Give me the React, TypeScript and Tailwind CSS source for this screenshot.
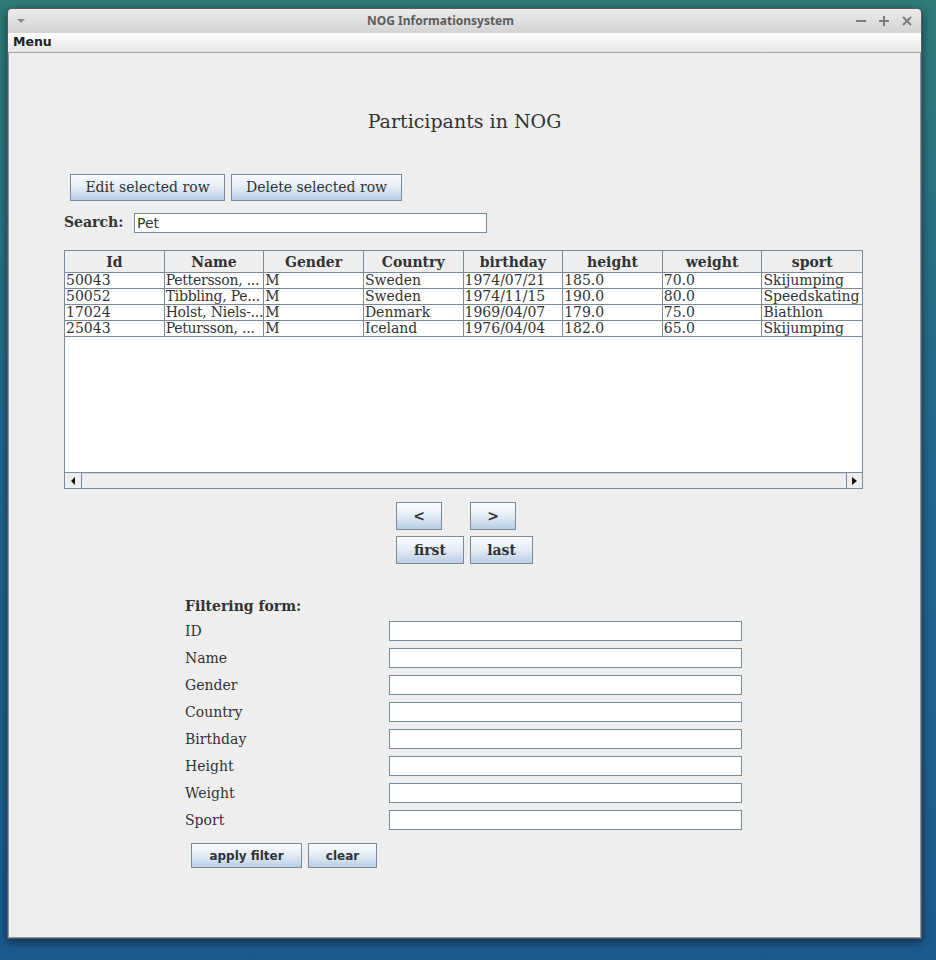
import React from "react";

const serif = "font-['DejaVu_Serif',serif]";
const sans = "font-['DejaVu_Sans',sans-serif]";

const columns = ["Id", "Name", "Gender", "Country", "birthday", "height", "weight", "sport"];

const rows = [
  ["50043", "Pettersson, ...", "M", "Sweden", "1974/07/21", "185.0", "70.0", "Skijumping"],
  ["50052", "Tibbling, Pe...", "M", "Sweden", "1974/11/15", "190.0", "80.0", "Speedskating"],
  ["17024", "Holst, Niels-...", "M", "Denmark", "1969/04/07", "179.0", "75.0", "Biathlon"],
  ["25043", "Petursson, ...", "M", "Iceland", "1976/04/04", "182.0", "65.0", "Skijumping"],
];

const filterFields = ["ID", "Name", "Gender", "Country", "Birthday", "Height", "Weight", "Sport"];

function JButton({ children, className = "" }: { children: React.ReactNode; className?: string }) {
  return (
    <button
      type="button"
      className={`flex items-center justify-center border border-[#7a8a99] bg-linear-to-b from-[#fbfdff] via-[#e2ebf5] to-[#bacfe5] text-[#333333] ${className}`}
    >
      {children}
    </button>
  );
}

function TextField({ value = "", className = "" }: { value?: string; className?: string }) {
  return (
    <div
      className={`h-[20px] border border-[#7a8a99] bg-white px-[2px] text-[14px] leading-[18px] text-[#333333] ${sans} ${className}`}
    >
      {value}
    </div>
  );
}

function ParticipantsTable() {
  return (
    <div className="flex h-[239px] w-[799px] flex-col border border-[#7a8a99] bg-white">
      <div className="grid h-[22px] grid-cols-8 border-b border-[#7a8a99] bg-[#eeeeee]">
        {columns.map((c, i) => (
          <div
            key={c}
            className={`flex items-center justify-center pt-[1px] text-[14px] font-bold text-[#333333] ${serif} ${
              i < columns.length - 1 ? "border-r border-[#7a8a99]" : ""
            }`}
          >
            {c}
          </div>
        ))}
      </div>
      {rows.map((r, ri) => (
        <div key={ri} className="grid h-[16px] grid-cols-8 border-b border-[#7a8a99]">
          {r.map((cell, ci) => (
            <div
              key={ci}
              className={`overflow-hidden whitespace-nowrap pl-[1px] text-[14px] leading-[15px] text-[#333333] ${serif} ${
                ci < r.length - 1 ? "border-r border-[#7a8a99]" : ""
              } ${ci === 1 ? "tracking-[-0.25px]" : ""}`}
            >
              {cell}
            </div>
          ))}
        </div>
      ))}
      <div className="flex-1" />
      {/* horizontal scrollbar */}
      <div className="flex h-[16px] border-t border-[#7a8a99] bg-[#eeeeee]">
        <div className="flex w-[17px] items-center justify-center border-r border-[#7a8a99]">
          <svg width="5" height="8" viewBox="0 0 5 8">
            <polygon points="4,0 0,4 4,8" fill="#111" />
          </svg>
        </div>
        <div className="flex-1 border-t border-[#c8d6e4]" />
        <div className="flex w-[16px] items-center justify-center border-l border-[#7a8a99]">
          <svg width="5" height="8" viewBox="0 0 5 8">
            <polygon points="0,0 5,4 0,8" fill="#111" />
          </svg>
        </div>
      </div>
    </div>
  );
}

export default function App() {
  return (
    <div className="h-[960px] w-[936px] overflow-hidden bg-linear-to-b from-[#2e7b78] via-[#216790] to-[#1c5a8e] pl-[7px] pt-[8px]">
      <div className="flex h-[931px] w-[915px] flex-col overflow-hidden rounded-t-[5px] border border-[#5a5a5a] shadow-[0_3px_10px_rgba(0,0,0,0.55)]">
        {/* title bar */}
        <div className="relative flex h-[24px] items-center bg-linear-to-b from-[#ececec] to-[#d3d3d3]">
          <svg className="ml-[9px]" width="8" height="5" viewBox="0 0 8 5">
            <polygon points="0,0 8,0 4,4" fill="#8a8a8a" />
          </svg>
          <div className="flex-1 text-center font-['Noto_Sans',sans-serif] text-[12px] font-bold text-[#5c5c5c]">
            NOG Informationsystem
          </div>
          <div className="mr-[9px] flex items-center gap-[13px]">
            <svg width="10" height="10" viewBox="0 0 10 10">
              <line x1="0" y1="5" x2="10" y2="5" stroke="#7c7c7c" strokeWidth="2" />
            </svg>
            <svg width="10" height="10" viewBox="0 0 10 10">
              <line x1="0" y1="5" x2="10" y2="5" stroke="#7c7c7c" strokeWidth="2" />
              <line x1="5" y1="0" x2="5" y2="10" stroke="#7c7c7c" strokeWidth="2" />
            </svg>
            <svg width="10" height="10" viewBox="0 0 10 10">
              <line x1="1" y1="1" x2="9" y2="9" stroke="#7c7c7c" strokeWidth="2" />
              <line x1="9" y1="1" x2="1" y2="9" stroke="#7c7c7c" strokeWidth="2" />
            </svg>
          </div>
        </div>

        {/* menu bar */}
        <div className="flex h-[20px] items-center border-b border-[#a2a2a2] bg-linear-to-b from-white to-[#e6e6e6] pl-[5px]">
          <span className={`text-[12.5px] font-bold text-[#222] ${sans}`}>Menu</span>
        </div>

        {/* content */}
        <div className="flex flex-1 flex-col border border-t-0 border-[#8796a5] bg-[#eeeeee]">
          <div className={`mt-[56px] text-center text-[19px] leading-[24px] text-[#333333] ${serif}`}>
            Participants in NOG
          </div>

          <div className="ml-[55px] mt-[41px] flex flex-col">
            <div className={`ml-[6px] flex gap-[6px] text-[14px] ${serif}`}>
              <JButton className="h-[27px] w-[155px]">Edit selected row</JButton>
              <JButton className="h-[27px] w-[171px]">Delete selected row</JButton>
            </div>

            <div className="mt-[11px] flex items-center">
              <span className={`w-[70px] text-[14px] font-bold text-[#333333] ${serif}`}>Search:</span>
              <TextField value="Pet" className="w-[353px]" />
            </div>

            <div className="mt-[17px]">
              <ParticipantsTable />
            </div>
          </div>

          <div className={`mx-auto mt-[13px] grid w-[137px] grid-cols-[68px_63px] gap-[6px] text-[14px] font-bold ${serif}`}>
            <JButton className="h-[28px] w-[46px]">&lt;</JButton>
            <JButton className="h-[28px] w-[46px]">&gt;</JButton>
            <JButton className="h-[28px] w-[68px]">first</JButton>
            <JButton className="h-[28px] w-[63px]">last</JButton>
          </div>

          <div className="ml-[176px] mt-[32px] flex w-[557px] flex-col">
            <div className={`text-[14px] font-bold leading-[20px] text-[#333333] ${serif}`}>Filtering form:</div>
            <div className="mt-[5px] flex flex-col gap-[7px]">
              {filterFields.map((f) => (
                <div key={f} className="flex h-[20px] items-center">
                  <span className={`w-[204px] text-[14px] text-[#333333] ${serif}`}>{f}</span>
                  <TextField className="w-[353px]" />
                </div>
              ))}
            </div>
            <div className={`ml-[6px] mt-[13px] flex gap-[6px] text-[12px] font-bold ${sans}`}>
              <JButton className="h-[25px] w-[111px]">apply filter</JButton>
              <JButton className="h-[25px] w-[69px]">clear</JButton>
            </div>
          </div>
        </div>
      </div>
    </div>
  );
}
